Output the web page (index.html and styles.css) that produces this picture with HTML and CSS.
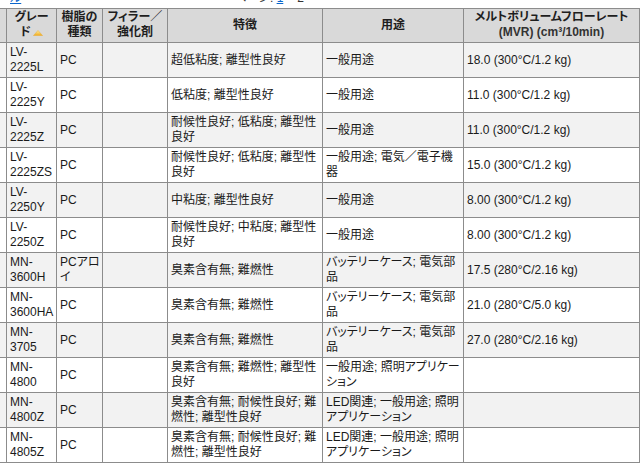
FILE: index.html
```html
<!DOCTYPE html>
<html lang="ja">
<head>
<meta charset="utf-8">
<title>グレード一覧</title>
<link rel="stylesheet" href="styles.css">
</head>
<body>
<div class="pager-row">
  <a class="link" href="#">ル</a>
  <span class="pager">ページ: <a class="link" href="#">1</a><span class="pg">2</span></span>
</div>
<table class="grid">
  <colgroup>
    <col class="w0"><col class="w1"><col class="w2"><col class="w3"><col class="w4"><col class="w5"><col class="w6">
  </colgroup>
  <thead>
    <tr>
      <th></th>
      <th>グレー<br>ド<svg class="sort" width="10" height="6" viewBox="0 0 10 6"><defs><linearGradient id="sg" x1="0" y1="0" x2="0" y2="1"><stop offset="0" stop-color="#fff2a8"/><stop offset="1" stop-color="#f0a818"/></linearGradient></defs><polygon points="5,0.5 9.5,5.5 0.5,5.5" fill="url(#sg)" stroke="#e8b040" stroke-width="0.6"/></svg></th>
      <th>樹脂の<br>種類</th>
      <th>フィラー／<br>強化剤</th>
      <th>特徴</th>
      <th>用途</th>
      <th>メルトボリュームフローレート<br><span class="sub">(MVR) (cm³/10min)</span></th>
    </tr>
  </thead>
  <tbody>
    <tr><td></td><td>LV-2225L</td><td>PC</td><td></td><td>超低粘度; 離型性良好</td><td>一般用途</td><td>18.0 (300°C/1.2 kg)</td></tr>
    <tr><td></td><td>LV-2225Y</td><td>PC</td><td></td><td>低粘度; 離型性良好</td><td>一般用途</td><td>11.0 (300°C/1.2 kg)</td></tr>
    <tr><td></td><td>LV-2225Z</td><td>PC</td><td></td><td>耐候性良好; 低粘度; 離型性良好</td><td>一般用途</td><td>11.0 (300°C/1.2 kg)</td></tr>
    <tr><td></td><td>LV-2225ZS</td><td>PC</td><td></td><td>耐候性良好; 低粘度; 離型性良好</td><td>一般用途; 電気／電子機器</td><td>15.0 (300°C/1.2 kg)</td></tr>
    <tr><td></td><td>LV-2250Y</td><td>PC</td><td></td><td>中粘度; 離型性良好</td><td>一般用途</td><td>8.00 (300°C/1.2 kg)</td></tr>
    <tr><td></td><td>LV-2250Z</td><td>PC</td><td></td><td>耐候性良好; 中粘度; 離型性良好</td><td>一般用途</td><td>8.00 (300°C/1.2 kg)</td></tr>
    <tr><td></td><td>MN-3600H</td><td>PCアロイ</td><td></td><td>臭素含有無; 難燃性</td><td>バッテリーケース; 電気部品</td><td>17.5 (280°C/2.16 kg)</td></tr>
    <tr><td></td><td>MN-3600HA</td><td>PC</td><td></td><td>臭素含有無; 難燃性</td><td>バッテリーケース; 電気部品</td><td>21.0 (280°C/5.0 kg)</td></tr>
    <tr><td></td><td>MN-3705</td><td>PC</td><td></td><td>臭素含有無; 難燃性</td><td>バッテリーケース; 電気部品</td><td>27.0 (280°C/2.16 kg)</td></tr>
    <tr><td></td><td>MN-4800</td><td>PC</td><td></td><td>臭素含有無; 難燃性; 離型性良好</td><td>一般用途; 照明アプリケーション</td><td></td></tr>
    <tr><td></td><td>MN-4800Z</td><td>PC</td><td></td><td>臭素含有無; 耐候性良好; 難燃性; 離型性良好</td><td>LED関連; 一般用途; 照明アプリケーション</td><td></td></tr>
    <tr><td></td><td>MN-4805Z</td><td>PC</td><td></td><td>臭素含有無; 耐候性良好; 難燃性; 離型性良好</td><td>LED関連; 一般用途; 照明アプリケーション</td><td></td></tr>
  </tbody>
</table>
</body>
</html>
```

FILE: styles.css
```css
html, body {
  margin: 0;
  padding: 0;
  background: #ffffff;
}

body {
  font-family: "Liberation Sans", "Noto Sans CJK JP", sans-serif;
  font-size: 12px;
  color: #222222;
  font-feature-settings: "palt";
}

.pager-row {
  display: flex;
  align-items: flex-start;
  box-sizing: border-box;
  width: 304px;
  height: 15px;
  line-height: 15px;
  margin-top: -9px;
  margin-bottom: 2px;
  padding-left: 10px;
}

.pager {
  margin-left: auto;
  color: #333333;
}

.pg {
  margin-left: 14px;
}

.link {
  color: #0a66cc;
  text-decoration: underline;
}

.grid {
  border-collapse: collapse;
  table-layout: fixed;
  width: 640px;
  margin-left: -1px;
}

.w0 { width: 7px; }
.w1 { width: 50px; }
.w2 { width: 46px; }
.w3 { width: 65px; }
.w4 { width: 155px; }
.w5 { width: 141px; }
.w6 { width: 176px; }

.grid th,
.grid td {
  border: 1px solid #8c8c8c;
  line-height: 15px;
  vertical-align: middle;
  overflow: hidden;
}

.grid th {
  background: #d9d9d9;
  font-weight: bold;
  text-align: center;
  padding: 1px 1px 2px;
  color: #1e1e1e;
}

.grid td {
  padding: 2px 1px 2px 3px;
  text-align: left;
  color: #1a1a1a;
}

.grid tbody tr:nth-child(odd) td {
  background: #f2f2f2;
}

.sort {
  margin-left: 2px;
  vertical-align: 0;
}

.sub {
  color: #333333;
}
```
